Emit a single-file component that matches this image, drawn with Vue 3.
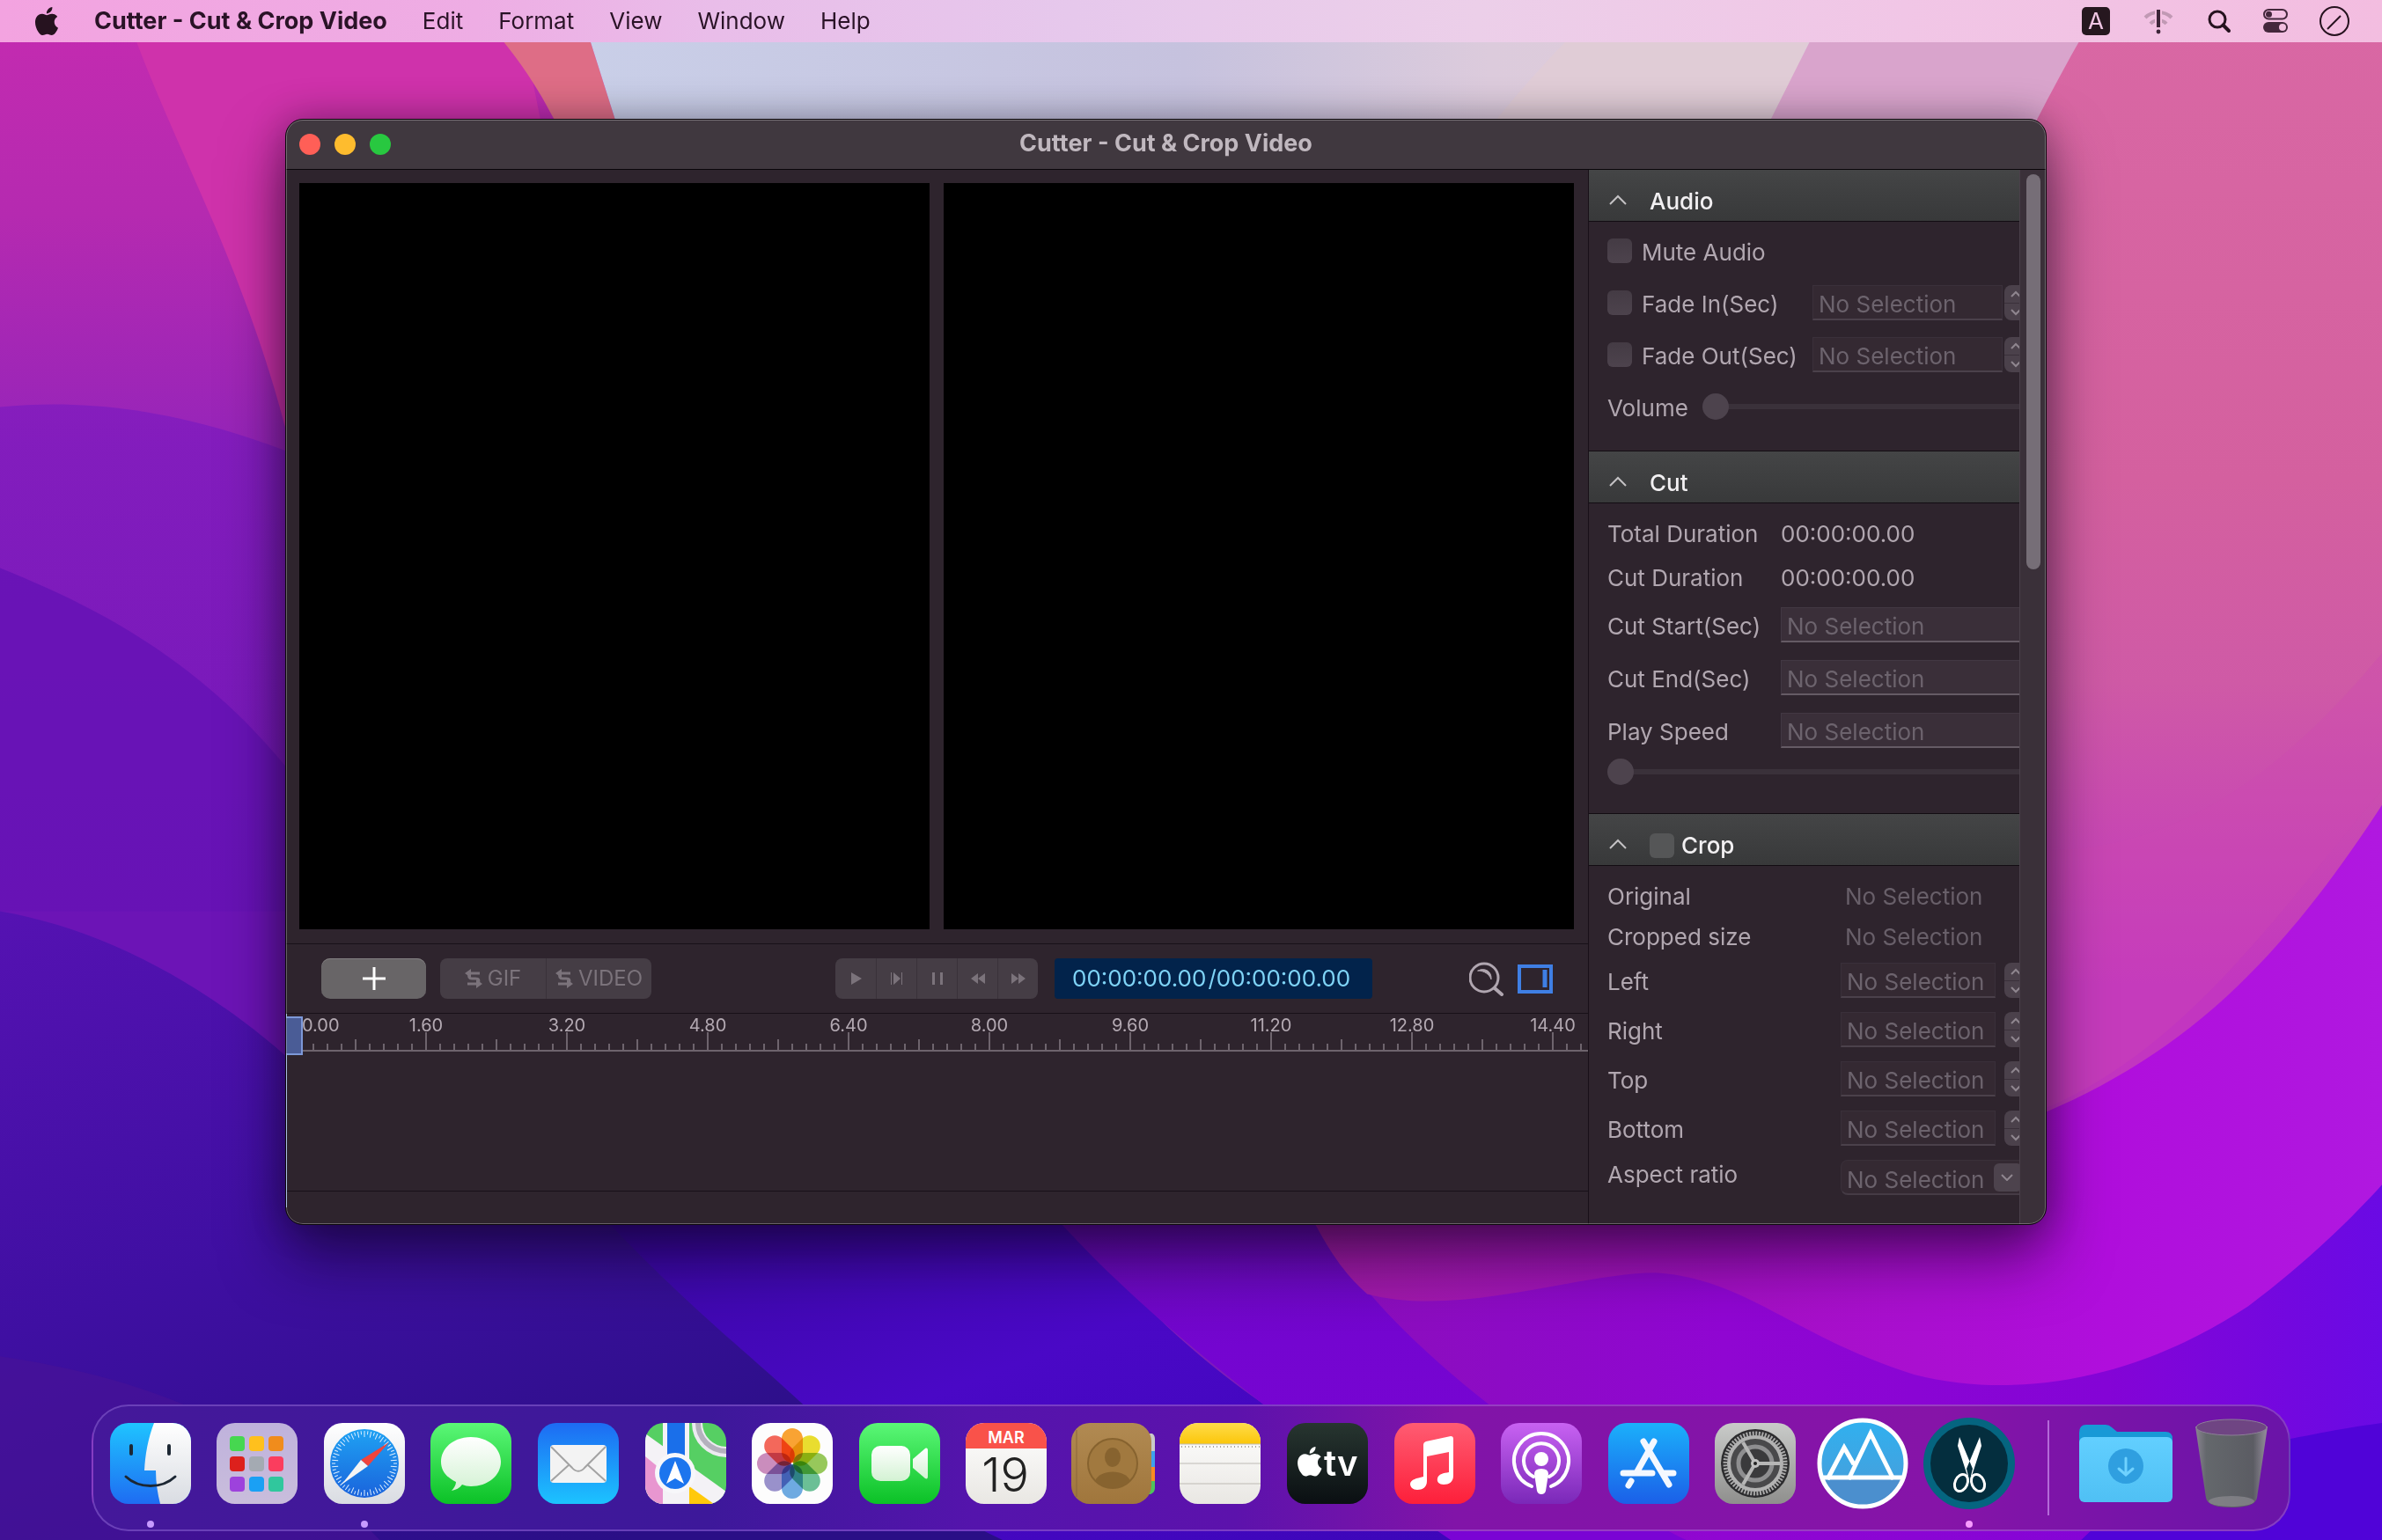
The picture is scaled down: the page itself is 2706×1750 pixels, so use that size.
<template>
  <div class="desktop">
    <svg class="wallpaper" viewBox="0 0 1568 1014" preserveAspectRatio="none" aria-hidden="true">
      <defs>
        <linearGradient id="wLeft" x1="0" y1="0" x2="0" y2="1">
          <stop offset="0" stop-color="#c52bb0" />
          <stop offset="0.14" stop-color="#b52ab0" />
          <stop offset="0.3" stop-color="#9424ba" />
          <stop offset="1" stop-color="#7a18bc" />
        </linearGradient>
        <linearGradient id="wRight" x1="0" y1="0" x2="0" y2="1">
          <stop offset="0" stop-color="#d968a4" />
          <stop offset="0.35" stop-color="#d4609f" />
          <stop offset="0.5" stop-color="#cf5aa6" />
          <stop offset="0.72" stop-color="#c236c0" />
        </linearGradient>
        <linearGradient id="wSky" x1="0" y1="0" x2="1" y2="0">
          <stop offset="0" stop-color="#c9cfe8" />
          <stop offset="0.4" stop-color="#c6c2de" />
          <stop offset="0.6" stop-color="#dccbdc" />
          <stop offset="1" stop-color="#e2cdd6" />
        </linearGradient>
        <linearGradient id="wViolet" x1="0" y1="0" x2="0" y2="1">
          <stop offset="0" stop-color="#7c1abf" />
          <stop offset="1" stop-color="#6a14b8" />
        </linearGradient>
        <linearGradient id="wIndigo" x1="0" y1="0" x2="0.6" y2="1">
          <stop offset="0" stop-color="#5512b2" />
          <stop offset="0.5" stop-color="#3f0fa2" />
          <stop offset="1" stop-color="#2a0f86" />
        </linearGradient>
        <linearGradient id="wBlue" x1="0" y1="0" x2="1" y2="1">
          <stop offset="0" stop-color="#36089c" />
          <stop offset="0.5" stop-color="#4a08c6" />
          <stop offset="1" stop-color="#3c06b8" />
        </linearGradient>
        <linearGradient id="wPurple" x1="0" y1="0" x2="0.3" y2="1">
          <stop offset="0" stop-color="#5e0fa8" />
          <stop offset="0.5" stop-color="#7405d0" />
          <stop offset="1" stop-color="#7a04d4" />
        </linearGradient>
        <linearGradient id="wMagenta" x1="0" y1="0" x2="1" y2="0">
          <stop offset="0" stop-color="#8a10b8" />
          <stop offset="0.4" stop-color="#9006d2" />
          <stop offset="0.75" stop-color="#8404d6" />
          <stop offset="1" stop-color="#6a0ae4" />
        </linearGradient>
        <linearGradient id="wOrchid" x1="0" y1="0" x2="1" y2="0">
          <stop offset="0" stop-color="#a01ca4" />
          <stop offset="0.4" stop-color="#a410c4" />
          <stop offset="0.75" stop-color="#b00edc" />
          <stop offset="1" stop-color="#b018e0" />
        </linearGradient>
      </defs>
      <rect width="1568" height="1014" fill="url(#wLeft)" />
      <path d="M80 0C110 90 160 170 190 290V400H420L340 0Z" fill="#cf32ab" />
      <path d="M308 0H380L405 79L425 180H410L365 79C350 50 335 30 308 0Z" fill="#de6d86" />
      <path d="M380 0H1380C1350 40 1320 120 1290 200H430L405 79Z" fill="url(#wSky)" />
      <path d="M1060 0C1035 20 1000 60 984 80H1170L1200 0Z" fill="#e0ccd6" />
      <path d="M1205 0C1190 30 1175 60 1160 90H1400V0Z" fill="#d9a4cc" />
      <path d="M1385 0C1366 30 1345 70 1325 110V900H1568V0Z" fill="url(#wRight)" />
      <path d="M0 268C60 262 130 270 220 310V600H0Z" fill="url(#wViolet)" opacity="0.7" />
      <path d="M0 374C70 402 140 440 200 520V760H0Z" fill="#6312b4" opacity="0.75" />
      <path d="M0 600C70 612 140 650 200 706L420 806C460 860 520 920 680 1014H0Z" fill="url(#wIndigo)" />
      <path d="M0 893C80 905 170 930 250 1014H0Z" fill="#4a1296" opacity="0.6" />
      <path d="M368 770C440 850 480 880 529 925C570 960 610 990 660 1014H1000C800 930 740 850 680 770Z" fill="url(#wBlue)" />
      <path d="M668 770C720 835 775 880 832 925C880 960 920 990 955 1014H1568V860L1000 760Z" fill="url(#wPurple)" />
      <path d="M845 765C880 835 920 880 1000 940C1040 970 1080 1000 1110 1014H1568V760L1200 780Z" fill="url(#wMagenta)" />
      <path d="M845 765C868 812 880 835 900 852C960 868 1040 838 1090 838C1150 842 1180 880 1260 905C1340 925 1420 900 1480 860C1520 830 1550 800 1568 780V530C1490 650 1420 710 1300 750Z" fill="url(#wOrchid)" />
      <path d="M1568 520C1500 600 1440 690 1346 730V560C1440 560 1510 500 1568 430Z" fill="#cc48b4" opacity="0.3" />
      <path d="M1568 937C1530 942 1510 948 1490 950C1440 960 1400 985 1370 1014H1568Z" fill="#5003d8" />
    </svg>

    <header class="menubar">
      <nav class="menus" aria-label="Menu bar">
        <a href="#" class="apple" aria-label="Apple">
          <svg viewBox="0 0 24 24"><path :d="applePath" /></svg>
        </a>
        <a href="#" class="app-name">Cutter - Cut &amp; Crop Video</a>
        <a v-for="m in menus" :key="m" href="#">{{ m }}</a>
      </nav>
      <div class="status">
        <span class="input-source">A</span>
        <svg class="st-wifi" viewBox="0 0 38 32" fill="none">
          <path d="M4 12C12 4 26 4 34 12M10 19C14 14 24 14 28 19" stroke="#c199b4" stroke-width="4" />
          <path d="M19 3V24" stroke="#f3bfe0" stroke-width="8" />
          <path d="M19 3V23" stroke="#3d2438" stroke-width="4" />
          <circle cx="19" cy="28" r="2.4" fill="#3d2438" />
        </svg>
        <svg class="st-icon" viewBox="0 0 28 28" fill="none" stroke="#26121f">
          <circle cx="12" cy="12" r="9" stroke-width="3" />
          <path d="M18.500 18.500L25 25" stroke-width="4" stroke-linecap="round" />
        </svg>
        <svg class="st-icon" viewBox="0 0 28 28" fill="none" stroke="#44273c">
          <rect x="1" y="1" width="26" height="10.500" rx="5.250" stroke-width="2" />
          <circle cx="6.500" cy="6.250" r="3.500" fill="#44273c" stroke="none" />
          <rect x="0" y="15" width="28" height="12" rx="6" fill="#44273c" stroke="none" />
          <circle cx="22" cy="21" r="4" fill="#f3bfe0" stroke="none" />
        </svg>
        <svg class="st-slash" viewBox="0 0 34 34" fill="none" stroke="#26121f">
          <circle cx="17" cy="17" r="16" stroke-width="2" />
          <path d="M9 26L24 11" stroke-width="2" />
        </svg>
      </div>
    </header>

    <main class="window">
      <div class="titlebar">
        <div class="lights">
          <button type="button" class="red" aria-label="Close"></button>
          <button type="button" class="yellow" aria-label="Minimize"></button>
          <button type="button" class="green" aria-label="Zoom"></button>
        </div>
        <h1>Cutter - Cut &amp; Crop Video</h1>
      </div>

      <div class="content">
        <section class="editor">
          <div class="viewers">
            <div class="viewer"></div>
            <div class="viewer"></div>
          </div>

          <div class="toolbar">
            <button type="button" class="add" aria-label="Add">
              <svg viewBox="0 0 28 28"><path d="M14 1V27M1 14H27" stroke="#fff" stroke-width="3" /></svg>
            </button>
            <div class="group export">
              <button v-for="x in ['GIF', 'VIDEO']" :key="x" type="button">
                <svg viewBox="0 0 20 22" fill="none" stroke="currentColor" stroke-width="3">
                  <path d="M17 5H5C4 9 5 11 8 11H12C16 11 17 13 15 17H3" />
                  <path d="M7 0L0 5L7 10ZM13 12L20 17L13 22Z" fill="currentColor" stroke="none" />
                </svg>
                {{ x }}
              </button>
            </div>
            <span class="grow-wide"></span>
            <div class="group player">
              <button v-for="p in playerButtons" :key="p.name" type="button" :aria-label="p.name">
                <svg viewBox="0 0 18 16"><path :d="p.d" fill="currentColor" /></svg>
              </button>
            </div>
            <output class="timecode"><span>00:00:00.00</span><span>/00:00:00.00</span></output>
            <span class="grow-narrow"></span>
            <button type="button" class="tool" aria-label="Zoom timeline">
              <svg viewBox="0 0 40 40" fill="none" stroke="#b0a6b0" stroke-linecap="round">
                <circle cx="17" cy="19" r="16" stroke-width="3" />
                <path d="M29 31L37 38" stroke-width="4" />
                <path d="M10 11C18 7 26 12 25 21C23 15 17 11 10 11Z" fill="#b0a6b0" stroke-width="1" />
              </svg>
            </button>
            <button type="button" class="tool" aria-label="Toggle sidebar">
              <svg viewBox="0 0 40 40" fill="none" stroke="#3f7fe4">
                <rect x="2" y="6" width="36" height="29" stroke-width="4" />
                <path d="M31 10V30" stroke-width="5" />
              </svg>
            </button>
          </div>

          <div class="timeline">
            <svg class="ruler" aria-label="Timeline ruler">
              <line x1="0" y1="42" x2="100%" y2="42" />
              <line v-for="t in ticks" :key="t.x" :x1="t.x" :x2="t.x" :y1="t.y" y2="42" />
              <text v-for="l in labels" :key="l.text" :x="l.x" y="20" :text-anchor="l.anchor">{{ l.text }}</text>
            </svg>
            <span class="playline"></span>
            <span class="playhead"></span>
          </div>
          <div class="statusline"></div>
        </section>

        <aside class="sidebar">
          <div class="panels">
            <h2>
              <svg viewBox="0 0 20 12"><path d="M1 11L10 2L19 11" /></svg>Audio
            </h2>
            <div class="panel audio">
              <div class="row">
                <label class="check"><input type="checkbox" /><span>Mute Audio</span></label>
              </div>
              <div v-for="f in fades" :key="f.id" class="row">
                <label class="check"><input type="checkbox" /><span>{{ f.label }}</span></label>
                <input :id="f.id" type="text" class="field faint" placeholder="No Selection" :aria-label="f.label" />
                <span class="stepper">
                  <button type="button" aria-label="Increase"><svg viewBox="0 0 14 8"><path d="M2 7L7 2L12 7" /></svg></button>
                  <button type="button" aria-label="Decrease"><svg viewBox="0 0 14 8"><path d="M2 1L7 6L12 1" /></svg></button>
                </span>
              </div>
              <div class="row">
                <label for="volume" class="name">Volume</label>
                <input id="volume" type="range" min="0" max="100" value="0" />
              </div>
            </div>

            <h2>
              <svg viewBox="0 0 20 12"><path d="M1 11L10 2L19 11" /></svg>Cut
            </h2>
            <div class="panel cut">
              <div v-for="d in durations" :key="d" class="row short">
                <span class="name">{{ d }}</span>
                <span class="value">00:00:00.00</span>
              </div>
              <div v-for="c in cutFields" :key="c.id" class="row">
                <label :for="c.id" class="name">{{ c.label }}</label>
                <input :id="c.id" type="text" class="field" placeholder="No Selection" />
              </div>
              <div class="row slider">
                <input type="range" min="0" max="100" value="0" aria-label="Play Speed" />
              </div>
            </div>

            <h2>
              <svg viewBox="0 0 20 12"><path d="M1 11L10 2L19 11" /></svg>
              <label class="crop-toggle"><input type="checkbox" />Crop</label>
            </h2>
            <div class="panel crop">
              <div v-for="s in sizes" :key="s" class="row short">
                <span class="name">{{ s }}</span>
                <span class="value dim">No Selection</span>
              </div>
              <div v-for="e in edges" :key="e" class="row">
                <label :for="e" class="name">{{ e }}</label>
                <input :id="e" type="text" class="field faint" placeholder="No Selection" />
                <span class="stepper">
                  <button type="button" aria-label="Increase"><svg viewBox="0 0 14 8"><path d="M2 7L7 2L12 7" /></svg></button>
                  <button type="button" aria-label="Decrease"><svg viewBox="0 0 14 8"><path d="M2 1L7 6L12 1" /></svg></button>
                </span>
              </div>
              <div class="row aspect">
                <label for="aspect" class="name">Aspect ratio</label>
                <span class="combo">
                  <select id="aspect"><option>No Selection</option></select>
                  <span class="combo-arrow"><svg viewBox="0 0 14 8"><path d="M1 1L7 7L13 1" /></svg></span>
                </span>
              </div>
            </div>
          </div>
          <div class="scrollbar"><div class="thumb"></div></div>
        </aside>
      </div>
    </main>

    <footer class="dock">
      <svg class="defs" aria-hidden="true">
        <defs>
          <linearGradient v-for="g in gradients" :id="g[0]" :key="g[0]" x1="0" y1="0" x2="0" y2="1">
            <stop offset="0" :stop-color="g[1]" />
            <stop offset="1" :stop-color="g[2]" />
          </linearGradient>
          <linearGradient id="gTrash" x1="0" y1="0" x2="1" y2="0">
            <stop offset="0" stop-color="#8b8592" />
            <stop offset="0.15" stop-color="#64686c" />
            <stop offset="0.8" stop-color="#5b5c63" />
            <stop offset="1" stop-color="#97909e" />
          </linearGradient>
          <clipPath id="tile"><rect width="92" height="92" rx="21" /></clipPath>
          <clipPath id="disc"><circle cx="52" cy="52" r="49" /></clipPath>
        </defs>
      </svg>
      <ul class="apps">
        <li class="running">
          <button type="button" aria-label="Finder">
            <svg viewBox="0 0 92 92"><g clip-path="url(#tile)">
              <rect width="92" height="92" fill="url(#gFinder)" />
              <path d="M50 0C43 18 40 36 39 54H52C52 68 54 80 57 92H92V0Z" fill="url(#gWhite)" />
              <path d="M24 26V35M67 26V35" stroke="#1c2733" stroke-width="4" stroke-linecap="round" />
              <path d="M18 61C33 75 59 75 74 61" fill="none" stroke="#1c2733" stroke-width="3" stroke-linecap="round" />
            </g></svg>
          </button>
        </li>
        <li>
          <button type="button" aria-label="Launchpad">
            <svg viewBox="0 0 92 92">
              <rect width="92" height="92" rx="21" fill="url(#gLaunch)" />
              <rect v-for="(c, i) in launchColors" :key="c" :x="15 + (i % 3) * 22" :y="15 + Math.floor(i / 3) * 23" width="17" height="17" rx="4" :fill="c" />
            </svg>
          </button>
        </li>
        <li class="running">
          <button type="button" aria-label="Safari">
            <svg viewBox="0 0 92 92">
              <rect width="92" height="92" rx="21" fill="url(#gWhite)" />
              <circle cx="46" cy="46" r="39" fill="url(#gSafari)" />
              <line v-for="n in 60" :key="n" x1="46" y1="9" x2="46" :y2="n % 2 ? 13 : 16" stroke="#dff0ff" stroke-width="1" :transform="`rotate(${n * 6} 46 46)`" />
              <path d="M74 22L50 49L42 42Z" fill="#f0443c" />
              <path d="M20 70L42 42L50 49Z" fill="#f4f4f4" />
            </svg>
          </button>
        </li>
        <li>
          <button type="button" aria-label="Messages">
            <svg viewBox="0 0 92 92">
              <rect width="92" height="92" rx="21" fill="url(#gGreen)" />
              <path d="M46 16C65 16 80 28 80 44S65 72 46 72C42 72 39 71 36 70C33 74 29 76 24 77C27 74 29 70 29 67C18 62 12 54 12 44C12 28 27 16 46 16Z" fill="url(#gBubble)" />
            </svg>
          </button>
        </li>
        <li>
          <button type="button" aria-label="Mail">
            <svg viewBox="0 0 92 92">
              <rect width="92" height="92" rx="21" fill="url(#gMail)" />
              <rect x="14" y="25" width="64" height="43" rx="4" fill="#f3f3f3" />
              <path d="M15 66L36 47M77 66L56 47M15 27L39 51C43 56 49 56 53 51L77 27" fill="none" stroke="#a3a3a3" stroke-width="2" />
            </svg>
          </button>
        </li>
        <li>
          <button type="button" aria-label="Maps">
            <svg viewBox="0 0 92 92"><g clip-path="url(#tile)">
              <rect width="92" height="92" fill="#56cf63" />
              <path d="M0 12L92 78V98H0Z" fill="#f4f2f6" />
              <path d="M0 38L22 56V92H0Z" fill="#e896d0" />
              <path d="M50 92V72L78 92Z" fill="#ffc90a" />
              <circle cx="92" cy="0" r="33" fill="none" stroke="#eceaf0" stroke-width="12" />
              <circle cx="92" cy="0" r="32" fill="none" stroke="#b4b1bd" stroke-width="6" />
              <path d="M20 0H50V92H20Z" fill="#f4f2f6" />
              <path d="M25 0H45V50H25Z" fill="#1a6fea" />
              <circle cx="34" cy="57" r="23" fill="#f7f7fa" />
              <circle cx="34" cy="57" r="18" fill="#1c75ee" />
              <path d="M34 43L44 69L34 63L24 69Z" fill="#fff" />
            </g></svg>
          </button>
        </li>
        <li>
          <button type="button" aria-label="Photos">
            <svg viewBox="0 0 92 92">
              <rect width="92" height="92" rx="21" fill="#fdfdfd" />
              <g class="petals">
                <rect v-for="(c, i) in petals" :key="c" x="34" y="6" width="24" height="39" rx="12" :fill="c" :transform="`rotate(${i * 45} 46 46)`" />
              </g>
            </svg>
          </button>
        </li>
        <li>
          <button type="button" aria-label="FaceTime">
            <svg viewBox="0 0 92 92">
              <rect width="92" height="92" rx="21" fill="url(#gGreen)" />
              <rect x="14" y="26" width="44" height="40" rx="10" fill="url(#gBubble)" />
              <path d="M61 41L75 29C77 28 78 29 78 31V61C78 63 77 64 75 63L61 51Z" fill="url(#gBubble)" />
            </svg>
          </button>
        </li>
        <li>
          <button type="button" aria-label="Calendar">
            <svg viewBox="0 0 92 92"><g clip-path="url(#tile)">
              <rect width="92" height="92" fill="url(#gPaper)" />
              <rect width="92" height="29" fill="#f9524a" />
              <text class="cal-month" x="46" y="23">MAR</text>
              <text class="cal-day" x="45" y="78">19</text>
            </g></svg>
          </button>
        </li>
        <li>
          <button type="button" aria-label="Contacts">
            <svg viewBox="0 0 96 92">
              <path d="M84 12H92Q95 14 95 18V32H84Z" fill="#c9c9c9" />
              <path d="M84 32H95V50H84Z" fill="#3ea2ee" />
              <path d="M84 50H95V66H84Z" fill="#fa8b21" />
              <path d="M84 66H95V74Q95 79 90 81H84Z" fill="#4fc35c" />
              <rect width="91" height="92" rx="21" fill="url(#gBrown)" />
              <path d="M6 8V84" stroke="#8b673a" stroke-width="1" />
              <circle cx="47" cy="46" r="28" fill="#a1793f" stroke="#87632f" stroke-width="2" />
              <ellipse cx="47" cy="39" rx="9" ry="11" fill="#87632f" />
              <path d="M27 66C32 52 62 52 67 66C57 76 37 76 27 66Z" fill="#87632f" />
            </svg>
          </button>
        </li>
        <li>
          <button type="button" aria-label="Notes">
            <svg viewBox="0 0 92 92"><g clip-path="url(#tile)">
              <rect width="92" height="92" fill="url(#gPaper)" />
              <rect width="92" height="24" fill="url(#gYellow)" />
              <path d="M0 24H92M0 46H92M0 69H92" stroke="#bdbab4" stroke-width="1" />
              <path d="M2 27H92" stroke="#aaa69e" stroke-width="2" stroke-dasharray="1 3" />
            </g></svg>
          </button>
        </li>
        <li>
          <button type="button" aria-label="TV">
            <svg viewBox="0 0 92 92">
              <rect width="92" height="92" rx="21" fill="url(#gTv)" />
              <path :d="applePath" fill="#fff" transform="translate(9 27) scale(1.4)" />
              <text class="tv" x="42" y="60">tv</text>
            </svg>
          </button>
        </li>
        <li>
          <button type="button" aria-label="Music">
            <svg viewBox="0 0 92 92">
              <rect width="92" height="92" rx="21" fill="url(#gMusic)" />
              <path d="M33 25Q33 22 36 21L64 15Q67 15 67 18V60C67 67 62 70 56 70C51 70 48 67 49 63C50 58 56 57 62 56V33L37 38V66C37 73 32 76 26 76C21 76 18 73 18 69C19 64 25 63 33 61Z" fill="#fff" />
            </svg>
          </button>
        </li>
        <li>
          <button type="button" aria-label="Podcasts">
            <svg viewBox="0 0 92 92">
              <rect width="92" height="92" rx="21" fill="url(#gPod)" />
              <path d="M35 72A31 31 0 1 1 57 72M37 61A20 20 0 1 1 55 61" fill="none" stroke="#fff" stroke-width="4" stroke-linecap="round" />
              <circle cx="46" cy="41" r="8" fill="#fff" />
              <path d="M38 58Q38 52 46 52T54 58L51 77Q50 81 46 81T41 77Z" fill="#fff" />
            </svg>
          </button>
        </li>
        <li>
          <button type="button" aria-label="App Store">
            <svg viewBox="0 0 92 92">
              <rect width="92" height="92" rx="21" fill="url(#gStore)" />
              <path d="M17 57H50M62 57H74M52 21L33 55M40 21L69 70M26 66L23 71" fill="none" stroke="#f4f8ff" stroke-width="7" stroke-linecap="round" />
            </svg>
          </button>
        </li>
        <li>
          <button type="button" aria-label="System Preferences">
            <svg viewBox="0 0 92 92">
              <rect width="92" height="92" rx="21" fill="url(#gGray)" />
              <circle cx="46" cy="46" r="39" fill="#2c2c2e" />
              <circle cx="46" cy="46" r="34" fill="none" stroke="#a9a9a9" stroke-width="5" stroke-dasharray="2 1.560" />
              <circle cx="46" cy="46" r="30" fill="#49494b" stroke="#b2b2b2" stroke-width="4" />
              <circle cx="46" cy="46" r="19" fill="#3a3a3c" stroke="#8e8e90" stroke-width="5" />
              <path d="M46 46H74M46 46L32 22M46 46L32 70" stroke="#b6b6b6" stroke-width="4" />
              <circle cx="46" cy="46" r="5" fill="#c0c0c0" />
              <circle cx="46" cy="46" r="2" fill="#222" />
            </svg>
          </button>
        </li>
        <li>
          <button type="button" class="round" aria-label="Mountain">
            <svg viewBox="0 0 104 104">
              <g clip-path="url(#disc)">
                <rect width="104" height="104" fill="url(#gSky)" />
                <rect y="70" width="104" height="34" fill="#4b8fce" />
                <path d="M0 68H104" stroke="#fff" stroke-width="5" />
                <path d="M12 70L31 34L42 53M36 70L61 18L87 70" fill="none" stroke="#fff" stroke-width="5" />
              </g>
              <circle cx="52" cy="52" r="49" fill="none" stroke="#fff" stroke-width="5" />
            </svg>
          </button>
        </li>
        <li class="running">
          <button type="button" class="round" aria-label="Cutter">
            <svg viewBox="0 0 104 104">
              <circle cx="52" cy="52" r="48" fill="#042e3e" stroke="#056580" stroke-width="8" />
              <path d="M41 22L56 58L54 66H50L39 32ZM64 22L49 58L51 66H55L66 32Z" fill="#fff" />
              <g fill="none" stroke="#fff" stroke-width="3">
                <ellipse cx="43" cy="74" rx="7" ry="10" transform="rotate(24 43 74)" />
                <ellipse cx="62" cy="74" rx="7" ry="10" transform="rotate(-24 62 74)" />
              </g>
            </svg>
          </button>
        </li>
      </ul>
      <span class="separator"></span>
      <button type="button" class="folder" aria-label="Downloads">
        <svg viewBox="0 0 106 90">
          <path d="M0 10Q0 1 8 1H30Q34 1 37 4L43 9H98Q106 9 106 17V50H0Z" fill="#1899d6" />
          <rect y="15" width="106" height="74" rx="6" fill="url(#gFolder)" />
          <circle cx="53" cy="48" r="20" fill="#2f9fe0" />
          <path d="M53 39V57M45 51L53 58L61 51" fill="none" stroke="#6fd2ff" stroke-width="3" stroke-linecap="round" />
        </svg>
      </button>
      <button type="button" class="trash" aria-label="Trash">
        <svg viewBox="0 0 82 102">
          <path d="M0 9L12 90Q14 101 41 101T70 90L82 9Z" fill="url(#gTrash)" />
          <ellipse cx="41" cy="10" rx="40" ry="9" fill="#6f4583" stroke="#8d7f98" stroke-width="1" />
          <ellipse cx="41" cy="94" rx="26" ry="6" fill="#8c8a90" opacity="0.7" />
        </svg>
      </button>
    </footer>
  </div>
</template>

<script setup>
const menus = ['Edit', 'Format', 'View', 'Window', 'Help']

const applePath = 'M12.152 6.896c-.948 0-2.415-1.078-3.96-1.04-2.04.027-3.91 1.183-4.961 3.014-2.117 3.675-.546 9.103 1.519 12.09 1.013 1.454 2.208 3.09 3.792 3.039 1.52-.065 2.09-.987 3.935-.987 1.831 0 2.35.987 3.96.948 1.637-.026 2.676-1.48 3.676-2.948 1.156-1.688 1.636-3.325 1.662-3.415-.039-.013-3.182-1.221-3.22-4.857-.026-3.04 2.48-4.494 2.597-4.559-1.429-2.09-3.623-2.324-4.39-2.376-2-.156-3.675 1.09-4.61 1.09zM15.53 3.83c.843-1.012 1.4-2.427 1.245-3.83-1.207.052-2.662.805-3.532 1.818-.78.896-1.454 2.338-1.273 3.714 1.338.104 2.715-.688 3.559-1.701'

const playerButtons = [
  { name: 'Play', d: 'M4 1L16 8L4 15Z' },
  { name: 'Next frame', d: 'M2 1H3V15H2ZM5 1L13 8L5 15ZM14 1H15V15H14Z' },
  { name: 'Pause', d: 'M3 1H6V15H3ZM12 1H15V15H12Z' },
  { name: 'Rewind', d: 'M9 2V14L1 8ZM17 2V14L9 8Z' },
  { name: 'Forward', d: 'M1 2V14L9 8ZM9 2V14L17 8Z' }
]

// Ruler: one small tick every 16px, a label every 10 ticks
const ticks = Array.from({ length: 160 }, (_, i) => ({
  x: i * 16 - 1,
  y: i % 10 === 0 ? 21 : i % 5 === 0 ? 29 : 34
}))
const labels = Array.from({ length: 10 }, (_, i) => ({
  text: (i * 1.6).toFixed(2),
  x: i === 0 ? 18 : i * 160 - 1,
  anchor: i === 0 ? 'start' : 'middle'
}))

const fades = [
  { id: 'fade-in', label: 'Fade In(Sec)' },
  { id: 'fade-out', label: 'Fade Out(Sec)' }
]
const durations = ['Total Duration', 'Cut Duration']
const cutFields = [
  { id: 'cut-start', label: 'Cut Start(Sec)' },
  { id: 'cut-end', label: 'Cut End(Sec)' },
  { id: 'play-speed', label: 'Play Speed' }
]
const sizes = ['Original', 'Cropped size']
const edges = ['Left', 'Right', 'Top', 'Bottom']

const launchColors = ['#46d750', '#ffc01d', '#f08c1c', '#dd201c', '#a4aab2', '#fb3d5e', '#9d42dc', '#1aa0f4', '#30c79d']
const petals = ['#fb9a1c', '#e9dc18', '#8dc54a', '#5cba8c', '#5fa3e0', '#8f86c8', '#c782b8', '#f4584a']
const gradients = [
  ['gFinder', '#1fc4ff', '#1e6cf2'],
  ['gWhite', '#ffffff', '#d9dce2'],
  ['gLaunch', '#bfb2dc', '#c9bddc'],
  ['gSafari', '#1fa2f3', '#1a63dc'],
  ['gGreen', '#5bf777', '#0bc126'],
  ['gBubble', '#ffffff', '#d3f2d3'],
  ['gMail', '#1d6bf3', '#1cc3ff'],
  ['gPaper', '#ffffff', '#e9e7e3'],
  ['gBrown', '#b18a52', '#a0763c'],
  ['gYellow', '#ffdc4a', '#fbc60a'],
  ['gTv', '#273530', '#0a0f12'],
  ['gMusic', '#ff5c72', '#fd1f3a'],
  ['gPod', '#c862f2', '#7a28b8'],
  ['gStore', '#1bb0fb', '#1b5fe8'],
  ['gGray', '#c9cbc9', '#8f8f8d'],
  ['gSky', '#2fb1f0', '#4d9ad6'],
  ['gFolder', '#62cfff', '#4fc0f4']
]
</script>

<style>
body {
  background: #3f0fa2;
}
</style>

<style scoped>
.desktop {
  position: relative;
  display: flex;
  flex-direction: column;
  min-height: 100vh;
  overflow: hidden;
  font-family: Inter, "Liberation Sans", sans-serif;
  font-size: 26px;
  line-height: 30px;
}

.desktop *,
.desktop *::before,
.desktop *::after {
  box-sizing: border-box;
}

.wallpaper {
  position: absolute;
  inset: 0;
  width: 100%;
  height: 100%;
}

button {
  display: flex;
  align-items: center;
  justify-content: center;
  padding: 0;
  border: 0;
  background: none;
  font: inherit;
  color: inherit;
}

input,
select {
  font: inherit;
  margin: 0;
}

svg {
  display: block;
}

/* Menu bar */
.menubar {
  position: relative;
  display: flex;
  justify-content: space-between;
  align-items: center;
  height: 48px;
  padding: 0 37px;
  background: linear-gradient(90deg, #f3a3e0 0%, #eeade4 20%, #e9bde9 30%, #e6c8ec 45%, #eccfe9 62%, #f1c6e6 80%, #f3bde0 100%);
}

.menus,
.status {
  display: flex;
  align-items: center;
}

.menus {
  gap: 40px;
}

.menus a {
  color: #2a1327;
  text-decoration: none;
}

.apple {
  width: 30px;
}

.apple svg {
  width: 32px;
  height: 32px;
  fill: #26121f;
}

.menus .app-name {
  font-size: 27px;
  font-weight: 700;
}

.status {
  gap: 36px;
}

.input-source {
  width: 32px;
  height: 32px;
  border-radius: 5px;
  background: #26171f;
  color: #f0c6e4;
  line-height: 32px;
  text-align: center;
}

.st-wifi {
  width: 38px;
  height: 32px;
}

.st-icon {
  width: 28px;
  height: 28px;
}

.st-slash {
  width: 34px;
  height: 34px;
}

/* Window */
.window {
  position: relative;
  margin: 87px 381px 80px 324px;
  border: 1px solid #0c080c;
  border-radius: 20px;
  background: #2e242d;
  box-shadow: 0 36px 70px rgba(10, 0, 20, 0.55), 0 0 40px rgba(10, 0, 20, 0.3);
  overflow: hidden;
}

.window::after {
  content: "";
  position: absolute;
  inset: 0;
  border: 1px solid rgba(255, 255, 255, 0.28);
  border-radius: 19px;
  pointer-events: none;
}

.titlebar {
  display: grid;
  grid-template-columns: 1fr auto 1fr;
  align-items: center;
  height: 57px;
  padding: 0 15px;
  border-bottom: 1px solid #0a060a;
  background: #40383f;
}

.titlebar h1 {
  margin: 0;
  padding-bottom: 2px;
  font-size: 27px;
  font-weight: 700;
  color: #c0b8bf;
}

.lights {
  display: flex;
  gap: 16px;
}

.lights button {
  width: 24px;
  height: 24px;
  border-radius: 50%;
}

.red {
  background: #ff5f57;
}

.yellow {
  background: #febc2e;
}

.green {
  background: #28c840;
}

.content {
  display: flex;
}

.editor {
  display: flex;
  flex: 1;
  flex-direction: column;
  min-width: 0;
}

.viewers {
  display: flex;
  flex: 1;
  gap: 16px;
  padding: 15px 16px 16px 15px;
}

.viewer {
  flex: 1;
  background: #000;
}

.toolbar {
  display: flex;
  align-items: center;
  height: 79px;
  padding: 0 40px;
  border-top: 1px solid #181018;
}

.add {
  width: 119px;
  height: 46px;
  margin-right: 16px;
  border-radius: 10px;
  background: #686567;
  box-shadow: inset 0 1px 0 #827f81;
}

.add svg {
  width: 28px;
  height: 28px;
}

.group {
  display: flex;
  height: 46px;
  border-radius: 8px;
  background: #453d45;
  color: #7b737b;
}

.group button + button {
  border-left: 1px solid #3a323a;
}

.export button {
  gap: 6px;
  width: 120px;
  font-size: 24px;
}

.export svg {
  width: 20px;
  height: 22px;
}

.player button {
  width: 46px;
}

.player svg {
  width: 18px;
  height: 16px;
}

.grow-wide {
  flex: 19;
}

.grow-narrow {
  flex: 10;
}

.timecode {
  display: flex;
  gap: 2px;
  width: 361px;
  height: 46px;
  margin-left: 19px;
  padding-left: 20px;
  border-radius: 4px;
  background: #02234b;
  color: #7fd4f7;
  line-height: 46px;
}

.tool + .tool {
  margin-left: 15px;
}

.tool svg {
  width: 40px;
  height: 40px;
}

.timeline {
  position: relative;
  height: 202px;
  border-top: 1px solid #181018;
}

.ruler {
  width: 100%;
  height: 47px;
}

.ruler line {
  stroke: #6e646d;
  stroke-width: 2;
}

.ruler text {
  fill: #b3a9b2;
  font-size: 20px;
}

.playhead {
  position: absolute;
  top: 3px;
  left: 0;
  width: 19px;
  height: 44px;
  border: 2px solid #7d98d8;
  border-left-width: 0;
  background: #4a5c96;
}

.playline {
  position: absolute;
  top: 0;
  left: 0;
  width: 1px;
  height: 220px;
  background: #8ba6dc;
}

.statusline {
  height: 38px;
  border-top: 1px solid #181018;
}

/* Sidebar */
.sidebar {
  display: flex;
  flex: none;
  width: 520px;
  border-left: 1px solid #181018;
  color: #b1a7b0;
}

.panels {
  flex: 1;
  min-width: 0;
  overflow: hidden;
}

.panels h2 {
  display: flex;
  align-items: center;
  height: 60px;
  margin: 0;
  padding: 14px 0 0 23px;
  border-top: 1px solid #120c12;
  border-bottom: 1px solid #120c12;
  background: linear-gradient(#444546, #38393a);
  color: #f2f0f2;
  font-size: 26px;
  font-weight: 500;
}

.panels h2:first-child {
  height: 59px;
  border-top: 0;
}

.panels h2 svg {
  width: 20px;
  height: 12px;
  margin: 0 26px 4px 0;
  fill: none;
  stroke: #c4c2c4;
  stroke-width: 2;
}

.crop-toggle {
  display: flex;
  align-items: center;
  gap: 8px;
}

.crop-toggle input[type="checkbox"] {
  background: #555657;
}

.panel {
  display: flex;
  flex-direction: column;
  padding-left: 21px;
}

.audio {
  gap: 19px;
  padding-top: 13px;
  padding-bottom: 30px;
}

.cut {
  gap: 20px;
  padding-top: 18px;
  padding-bottom: 32px;
}

.crop {
  gap: 16px;
  padding-top: 18px;
  padding-bottom: 33px;
}

.row {
  display: flex;
  flex: none;
  align-items: center;
  height: 40px;
  white-space: nowrap;
}

.row.short {
  height: 30px;
}

.row.slider {
  height: 30px;
  margin-top: -8px;
}

.row.aspect {
  align-items: flex-start;
}

.name,
.value,
.check span {
  padding-top: 4px;
}

.aspect .name {
  padding-top: 2px;
}

.name {
  flex: none;
}

.audio .name {
  width: 108px;
}

.cut .name {
  width: 197px;
}

.crop .name {
  width: 265px;
}

.value.dim {
  padding-left: 5px;
  color: #685f69;
}

.check {
  display: flex;
  flex: none;
  align-items: center;
  gap: 11px;
  width: 233px;
}

input[type="checkbox"] {
  appearance: none;
  width: 28px;
  height: 28px;
  border-radius: 6px;
  background: linear-gradient(#443b44, #4d434d);
}

.field {
  flex: none;
  width: 300px;
  height: 40px;
  padding: 4px 6px 0;
  border: 1px solid #423843;
  border-bottom: 2px solid #655b65;
  border-radius: 0;
  background: #3a2f39;
  color: #b1a7b0;
}

.field.faint {
  border-color: #3a303a;
  border-bottom-color: #4b414b;
  background: #342932;
}

.field::placeholder {
  color: #6c636d;
  opacity: 1;
}

.audio .field {
  width: 216px;
}

.crop .field {
  width: 176px;
}

.stepper {
  flex: none;
  width: 26px;
  height: 40px;
  margin-left: 2px;
  border-radius: 8px;
  background: #4b414b;
}

.crop .stepper {
  margin-left: 10px;
}

.stepper button {
  width: 26px;
  height: 20px;
}

.stepper button + button {
  border-top: 1px solid #3a303a;
}

.stepper svg,
.combo-arrow svg {
  width: 14px;
  height: 8px;
  fill: none;
  stroke: #8f868f;
  stroke-width: 2;
}

input[type="range"] {
  appearance: none;
  flex: none;
  width: 480px;
  height: 30px;
  background: none;
}

input[type="range"]::-webkit-slider-runnable-track {
  height: 6px;
  border-radius: 3px;
  background: #3a313a;
}

input[type="range"]::-webkit-slider-thumb {
  appearance: none;
  width: 30px;
  height: 30px;
  margin-top: -12px;
  border-radius: 50%;
  background: #4d434d;
}

.combo {
  position: relative;
  flex: none;
  width: 220px;
  height: 40px;
}

.combo select {
  appearance: none;
  width: 220px;
  height: 40px;
  padding: 6px 6px 0;
  border: 1px solid #3a303a;
  border-bottom: 2px solid #453b45;
  border-radius: 8px;
  background: #342932;
  color: #6c636d;
}

.combo-arrow {
  position: absolute;
  top: 4px;
  left: 174px;
  display: flex;
  align-items: center;
  width: 32px;
  height: 32px;
  padding-left: 8px;
  border-radius: 6px;
  background: #4d434d;
  pointer-events: none;
}

.scrollbar {
  flex: 0 0 30px;
  padding: 5px 6px 0 7px;
  border-left: 1px solid #4a404a;
  background: #3a3039;
}

.thumb {
  height: 449px;
  border-radius: 8px;
  background: #766e77;
}

/* Dock */
.dock {
  position: relative;
  display: flex;
  align-items: center;
  height: 144px;
  margin: auto 104px 10px;
  padding: 0 24px 0 4px;
  border: 2px solid rgba(200, 160, 255, 0.3);
  border-radius: 42px;
  background: linear-gradient(90deg, #44189a 0%, #3d189a 28%, #5414ac 40%, #5c12ac 52%, #8114a8 62%, #8614a8 84%, #6a14a8 100%);
}

.defs {
  position: absolute;
  width: 0;
  height: 0;
}

.apps {
  display: flex;
  flex: 1;
  height: 100%;
  margin: 0;
  padding: 0;
  list-style: none;
}

.apps li {
  position: relative;
  display: flex;
  flex: 1;
  align-items: center;
  justify-content: center;
  padding-bottom: 10px;
}

.apps svg {
  height: 92px;
  overflow: visible;
}

.apps .round svg {
  height: 104px;
}

.running::after {
  content: "";
  position: absolute;
  bottom: 2px;
  left: 50%;
  width: 8px;
  height: 8px;
  margin-left: -4px;
  border-radius: 50%;
  background: #c79bff;
}

.running:last-child::after {
  background: #f79bff;
}

.petals rect {
  mix-blend-mode: multiply;
  opacity: 0.9;
}

.cal-month {
  fill: #fff;
  font-size: 18px;
  font-weight: 600;
  text-anchor: middle;
}

.cal-day {
  fill: #222;
  font-size: 54px;
  font-weight: 300;
  text-anchor: middle;
}

.tv {
  fill: #fff;
  font-size: 40px;
  font-weight: 600;
}

.separator {
  width: 2px;
  height: 108px;
  margin: 0 34px 0 28px;
  background: #b46ad8;
}

.folder {
  margin-right: 26px;
}

.folder svg {
  width: 106px;
  height: 90px;
}

.trash svg {
  width: 82px;
  height: 102px;
}

.folder,
.trash {
  padding-bottom: 10px;
}
</style>
